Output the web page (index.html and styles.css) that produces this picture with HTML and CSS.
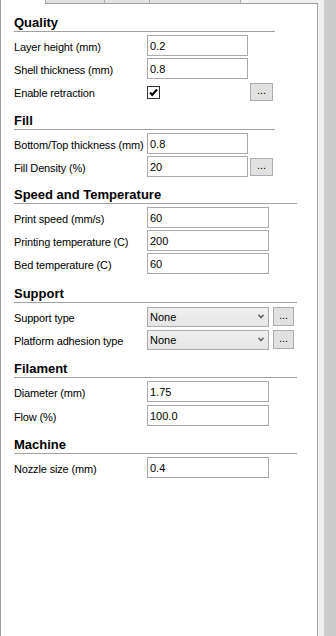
FILE: index.html
```html
<!DOCTYPE html>
<html lang="en">
<head>
  <meta charset="UTF-8">
  <meta name="viewport" content="width=device-width, initial-scale=1.0">
  <title>Print settings</title>
  <link rel="stylesheet" href="styles.css">
</head>
<body>
  <div class="window">
    <div class="notebook">
      <div class="tabs">
        <div class="tab-active"></div>
        <div class="tab tab-2"></div>
        <div class="tab tab-3"></div>
        <div class="tab tab-4"></div>
        <div class="tab-rest"></div>
      </div>
      <div class="page">
        <section class="group group-short">
          <h2 class="group-title">Quality</h2>
          <div class="rows">
            <div class="row"><label>Layer height (mm)</label><input class="field field-short" value="0.2"></div>
            <div class="row"><label>Shell thickness (mm)</label><input class="field field-short" value="0.8"></div>
            <div class="row">
              <label>Enable retraction</label>
              <span class="check">
                <svg width="13" height="13" viewBox="0 0 13 13"><rect x="0.5" y="0.5" width="12" height="12" fill="#fff" stroke="#333"/><path d="M3 6.5 L5.2 9 L10 3.5" fill="none" stroke="#000" stroke-width="2"/></svg>
              </span>
              <button class="more more-check">...</button>
            </div>
          </div>
        </section>

        <section class="group group-short">
          <h2 class="group-title">Fill</h2>
          <div class="rows">
            <div class="row"><label>Bottom/Top thickness (mm)</label><input class="field field-short" value="0.8"></div>
            <div class="row"><label>Fill Density (%)</label><input class="field field-short" value="20"><button class="more">...</button></div>
          </div>
        </section>

        <section class="group group-tight">
          <h2 class="group-title">Speed and Temperature</h2>
          <div class="rows">
            <div class="row"><label>Print speed (mm/s)</label><input class="field" value="60"></div>
            <div class="row"><label>Printing temperature (C)</label><input class="field" value="200"></div>
            <div class="row"><label>Bed temperature (C)</label><input class="field" value="60"></div>
          </div>
        </section>

        <section class="group group-loose">
          <h2 class="group-title">Support</h2>
          <div class="rows">
            <div class="row">
              <label>Support type</label>
              <div class="select"><span>None</span><svg width="6" height="5" viewBox="0 0 6 5"><path d="M0.5 0.8 L3 3.6 L5.5 0.8" fill="none" stroke="#666" stroke-width="1.6"/></svg></div>
              <button class="more more-select">...</button>
            </div>
            <div class="row">
              <label>Platform adhesion type</label>
              <div class="select"><span>None</span><svg width="6" height="5" viewBox="0 0 6 5"><path d="M0.5 0.8 L3 3.6 L5.5 0.8" fill="none" stroke="#666" stroke-width="1.6"/></svg></div>
              <button class="more more-select">...</button>
            </div>
          </div>
        </section>

        <section class="group">
          <h2 class="group-title">Filament</h2>
          <div class="rows rows-wide">
            <div class="row"><label>Diameter (mm)</label><input class="field" value="1.75"></div>
            <div class="row"><label>Flow (%)</label><input class="field" value="100.0"></div>
          </div>
        </section>

        <section class="group">
          <h2 class="group-title">Machine</h2>
          <div class="rows">
            <div class="row"><label>Nozzle size (mm)</label><input class="field" value="0.4"></div>
          </div>
        </section>
      </div>
    </div>
    <div class="gutter"></div>
    <div class="scrollbar"></div>
  </div>
</body>
</html>
```

FILE: styles.css
```css
body {
  margin: 0;
  padding: 0;
  font-family: 'Liberation Sans', Arial, sans-serif;
  font-size: 11px;
  color: #000;
  background: #f0f0f0;
}
.window {
  display: flex;
  height: 636px;
  overflow: hidden;
}
.notebook {
  width: 318px;
  display: flex;
  flex-direction: column;
}
.tabs {
  display: flex;
  height: 4px;
}
.tabs div {
  box-sizing: border-box;
  height: 4px;
}
.tab-active {
  width: 45px;
  background: #fff;
  border-left: 1px solid #a0a0a0;
}
.tab {
  background: #e3e3e3;
  border-left: 1px solid #adadad;
  border-bottom: 1px solid #a0a0a0;
}
.tab-2 { width: 59px; }
.tab-3 { width: 45px; }
.tab-4 {
  width: 92px;
  border-right: 1px solid #adadad;
}
.tab-rest {
  flex: 1;
  border-bottom: 1px solid #a0a0a0;
}
.page {
  flex: 1;
  box-sizing: border-box;
  background: #fff;
  border-left: 1px solid #a0a0a0;
  border-right: 1px solid #a0a0a0;
  padding-left: 13px;
}
.gutter {
  width: 6px;
  background: #f0f0f0;
}
.scrollbar {
  width: 12px;
  background: #cdcdcd;
}
.group {
  width: 283px;
}
.group-short {
  width: 261px;
}
.group-title {
  margin: 11px 0 0;
  font-size: 13px;
  line-height: 16px;
  font-weight: bold;
  border-bottom: 1px solid #a0a0a0;
}
.group-tight .group-title {
  margin-top: 10px;
}
.group-loose .group-title {
  margin-top: 12px;
}
.rows {
  margin-top: 3px;
  display: flex;
  flex-direction: column;
  gap: 2px;
}
.rows-wide {
  gap: 3px;
}
.row {
  display: flex;
  align-items: center;
  height: 21px;
}
.row label {
  width: 133px;
  flex: none;
  padding-top: 2px;
  letter-spacing: -0.15px;
}
.field {
  box-sizing: border-box;
  width: 122px;
  height: 21px;
  margin: 0;
  padding: 0 0 0 2px;
  border: 1px solid #a9a9a9;
  font-family: inherit;
  font-size: 11px;
  color: #000;
  background: #fff;
  outline: none;
}
.field-short {
  width: 101px;
}
.check {
  display: flex;
  width: 13px;
  height: 13px;
  margin-top: 2px;
}
.more {
  box-sizing: border-box;
  width: 23px;
  height: 18px;
  margin: 0 0 0 2px;
  padding: 0 0 3px;
  border: 1px solid #adadad;
  background: #e1e1e1;
  font-family: inherit;
  font-size: 11px;
  line-height: 10px;
  color: #000;
}
.more-check {
  margin-left: 90px;
}
.more-select {
  width: 21px;
  height: 19px;
  margin-left: 4px;
}
.select {
  box-sizing: border-box;
  display: flex;
  align-items: center;
  justify-content: space-between;
  width: 122px;
  height: 20px;
  padding: 0 4px 0 2px;
  border: 1px solid #acacac;
  background: linear-gradient(#f0f0f0, #e5e5e5);
}
```
